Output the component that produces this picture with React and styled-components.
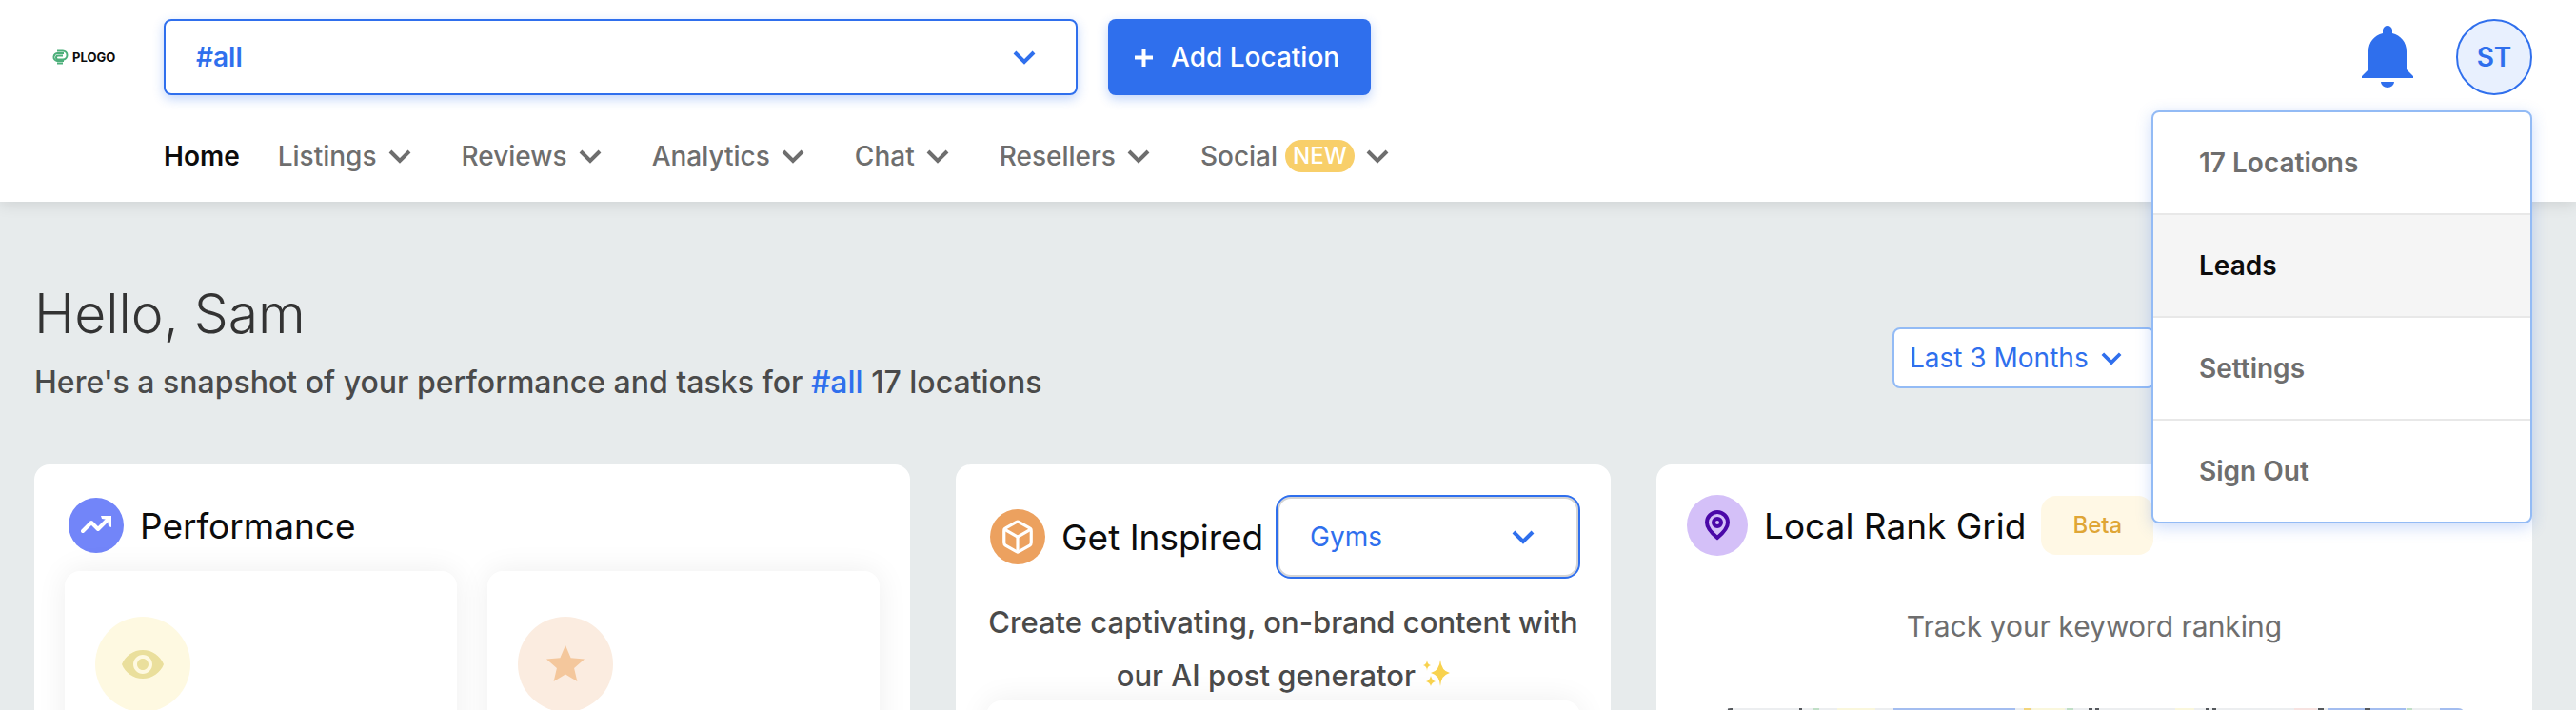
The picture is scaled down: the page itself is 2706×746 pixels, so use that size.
import * as React from 'react';
import styled, { createGlobalStyle, css } from 'styled-components';
import { MdRemoveRedEye, MdStar } from 'react-icons/md';
import { FiBox } from 'react-icons/fi';

const BLUE = '#2f6fed';
const LIGHT_BLUE = '#93bbf5';
const GREY = '#6e6e6e';

const NAV_ITEMS = [
  { name: 'Listings' },
  { name: 'Reviews' },
  { name: 'Analytics' },
  { name: 'Chat' },
  { name: 'Resellers' },
  { name: 'Social', isNew: true },
];

const MENU_ITEMS = ['17 Locations', 'Leads', 'Settings', 'Sign Out'];

const GlobalStyle = createGlobalStyle`
  * {
    box-sizing: border-box;
  }

  body {
    margin: 0;
    min-height: 100vh;
    background: #e7ebec;
    color: #0c0c0c;
    font-family: Inter, 'Liberation Sans', sans-serif;
    font-size: 28px;
    overflow: hidden;
  }

  button,
  select {
    font: inherit;
    color: inherit;
  }

  h1,
  h2,
  p,
  ul {
    margin: 0;
    padding: 0;
  }

  a {
    color: inherit;
    text-decoration: none;
  }
`;

const Header = styled.header`
  position: relative;
  z-index: 2;
  display: grid;
  grid-template-columns: 172px 1fr;
  padding: 20px 46px 0 0;
  background: #fff;
  box-shadow: 0 2px 16px rgba(0, 0, 0, 0.12);
`;

const Logo = styled.a`
  display: flex;
  align-items: center;
  gap: 4px;
  padding-left: 55px;
  font-size: 13px;
  font-weight: 700;
`;

const TopBar = styled.div`
  display: flex;
  align-items: center;
  gap: 32px;
  height: 80px;
`;

const SelectBox = styled.div`
  display: grid;
  align-items: center;
  color: ${BLUE};

  > * {
    grid-area: 1 / 1;
  }

  > svg {
    justify-self: end;
    pointer-events: none;
  }
`;

const Select = styled.select`
  appearance: none;
  width: 100%;
  height: 100%;
  border: 2px solid ${BLUE};
  background: #fff;
  outline: none;
`;

const LocationBox = styled(SelectBox)`
  flex: 0 1 960px;
  height: 80px;

  > svg {
    margin-right: 44px;
  }

  ${Select} {
    padding: 0 32px;
    border-radius: 8px;
    box-shadow: 0 4px 12px rgba(47, 111, 237, 0.3);
    font-weight: 600;
  }
`;

const AddButton = styled.button`
  display: flex;
  align-items: center;
  gap: 19px;
  height: 80px;
  padding: 0 33px 0 28px;
  border: 0;
  border-radius: 8px;
  background: ${BLUE};
  box-shadow: 0 4px 12px rgba(47, 111, 237, 0.3);
  color: #fff;
  font-weight: 500;
`;

const Account = styled.div`
  position: relative;
  display: flex;
  align-items: center;
  gap: 45px;
  margin-left: auto;
`;

const BellButton = styled.button`
  display: flex;
  padding: 0;
  border: 0;
  background: none;
`;

const Avatar = styled.button`
  width: 80px;
  height: 80px;
  padding: 0;
  border: 2px solid ${BLUE};
  border-radius: 50%;
  background: #e8f0fe;
  color: ${BLUE};
  font-weight: 600;
`;

const Menu = styled.ul`
  position: absolute;
  top: 96px;
  right: 0;
  width: 400px;
  border: 2px solid ${LIGHT_BLUE};
  border-radius: 8px;
  background: #fff;
  box-shadow: 0 4px 16px rgba(47, 111, 237, 0.25);
  list-style: none;
  overflow: hidden;
`;

const MenuItem = styled.li`
  color: ${GREY};
  font-weight: 600;

  & + & {
    border-top: 2px solid #e8e8e8;
  }

  a {
    display: block;
    padding: 0 48px;
    line-height: 106px;
  }

  ${({ $active }) =>
    $active &&
    css`
      background: #f5f5f5;
      color: #0c0c0c;
    `}
`;

const Nav = styled.nav`
  grid-column: 2;
  display: flex;
  align-items: center;
  gap: 53px;
  height: 112px;
  padding-top: 16px;
  color: ${GREY};
  font-weight: 500;
`;

const HomeLink = styled.a`
  margin-right: -13px;
  color: #0c0c0c;
  font-weight: 600;
`;

const NavButton = styled.button`
  display: flex;
  align-items: center;
  gap: 12px;
  padding: 0;
  border: 0;
  background: none;
`;

const NewBadge = styled.span`
  margin-left: -4px;
  padding: 0 8px;
  border-radius: 17px;
  background: #f8cf6a;
  color: #fff;
  font-size: 24px;
  line-height: 34px;
`;

const Page = styled.main`
  padding: 80px 46px 0 36px;
`;

const Intro = styled.section`
  display: flex;
  align-items: flex-start;
  justify-content: space-between;
`;

const Hello = styled.h1`
  color: #333;
  font-size: 57px;
  font-weight: 300;
  line-height: 76px;
`;

const Snapshot = styled.p`
  padding-top: 14px;
  color: #4a4a4a;
  font-size: 32px;
  font-weight: 500;
  line-height: 40px;

  a {
    color: ${BLUE};
  }
`;

const PeriodBox = styled(SelectBox)`
  width: 276px;
  height: 64px;
  margin: 52px 396px 0 0;

  > svg {
    margin-right: 35px;
  }

  ${Select} {
    padding: 0 16px;
    border-color: ${LIGHT_BLUE};
    border-radius: 8px;
  }
`;

const Cards = styled.section`
  display: grid;
  grid-template-columns: 115fr 86fr 115fr;
  gap: 48px;
  padding-top: 66px;
`;

const Card = styled.article`
  height: 600px;
  padding: 32px;
  border-radius: 16px;
  background: #fff;
`;

const CardHead = styled.div`
  display: flex;
  align-items: center;
  height: ${({ $height }) => $height}px;
  padding-left: ${({ $inset }) => $inset || 0}px;
`;

const CardTitle = styled.h2`
  margin-left: 17px;
  font-size: 37px;
  font-weight: 400;
  white-space: nowrap;
`;

const Circle = styled.span`
  display: flex;
  align-items: center;
  justify-content: center;
  flex: none;
  width: ${({ $size }) => $size}px;
  height: ${({ $size }) => $size}px;
  border-radius: 50%;
  background: ${({ $background }) => $background};
  color: ${({ $color }) => $color || '#fff'};
`;

const Tiles = styled.div`
  display: grid;
  grid-template-columns: 1fr 1fr;
  gap: 32px;
  padding-top: 16px;
`;

const Tile = styled.div`
  height: 360px;
  padding: 48px 32px;
  border-radius: 16px;
  background: #fff;
  box-shadow: 0 0 32px rgba(0, 0, 0, 0.07);
`;

const TopicBox = styled(SelectBox)`
  flex: 0 1 320px;
  height: 88px;
  margin-left: auto;

  > svg {
    margin-right: 48px;
  }

  ${Select} {
    padding: 0 34px;
    border-radius: 16px;
    box-shadow: inset 0 0 0 2px #d4d4d4;
  }
`;

const Pitch = styled.p`
  margin: 18px 0 -2px;
  color: #4a4a4a;
  font-size: 31px;
  font-weight: 500;
  line-height: 56px;
  text-align: center;
  white-space: nowrap;
`;

const BetaBadge = styled.span`
  margin-left: 16px;
  padding: 0 33px;
  border-radius: 16px;
  background: #fff8e5;
  color: #dfa636;
  font-size: 24px;
  font-weight: 500;
  line-height: 62px;
`;

const Track = styled.p`
  padding-top: 54px;
  color: ${GREY};
  font-size: 30px;
  line-height: 40px;
  text-align: center;
`;

const MapImage = styled.svg`
  display: block;
  width: calc(100% - 76px);
  height: 240px;
  margin: 66px auto 0;
  border-radius: 8px;
`;

const Chevron = ({ width = 24 }) => (
  <svg width={width} viewBox="0 0 24 16" fill="none" aria-hidden="true">
    <path d="M2 3l10 10L22 3" stroke="currentColor" strokeWidth="4" />
  </svg>
);

const PlusIcon = () => (
  <svg width="19" height="19" viewBox="0 0 19 19" aria-hidden="true">
    <path d="M9.5 0v19M0 9.5h19" stroke="currentColor" strokeWidth="4" />
  </svg>
);

const LogoMark = () => (
  <svg width="17" height="16" viewBox="0 0 17 16" fill="none" aria-hidden="true">
    <g stroke="#4caf7a" strokeWidth="2">
      <path d="M5 1.5h6a4.500 4.500 0 0 1 0 9H6a2 2 0 0 1 0-4h5" />
      <path d="M12 4H6a4 4 0 0 0-1 8h7M5 14.5h6" />
    </g>
  </svg>
);

const BellIcon = () => (
  <svg width="54" height="66" viewBox="0 0 54 66" fill={BLUE} aria-hidden="true">
    <path d="M22 8V5a5 5 0 0 1 10 0v3c9 2 15 9.5 15 19v19l7 7v2H0v-2l7-7V27C7 17.5 13 10 22 8z" />
    <path d="M20 59h14a7 6 0 0 1-14 0z" />
  </svg>
);

const TrendIcon = () => (
  <svg width="32" height="24" viewBox="0 0 32 24" fill="none" aria-hidden="true">
    <path
      d="M2 18L11 9l7 7L29 5"
      stroke="currentColor"
      strokeWidth="4"
      strokeLinecap="round"
      strokeLinejoin="round"
    />
    <path d="M21 2h11v12l-3-1-1-7-6-1z" fill="currentColor" />
  </svg>
);

const PinIcon = () => (
  <svg width="28" height="32" viewBox="0 0 28 32" fill="none" aria-hidden="true">
    <g stroke="#4a08a8" strokeWidth="4">
      <path d="M14 29C8 24 3 19 3 13a11 11 0 0 1 22 0c0 6-5 11-11 16z" />
      <circle cx="14" cy="13" r="4" />
    </g>
  </svg>
);

const Sparkles = () => (
  <svg width="28" height="28" viewBox="0 0 28 28" fill="#f8d24e" aria-hidden="true">
    <path d="M18 0q1 12 10 14-9 2-10 14-1-12-10-14 9-2 10-14z" />
    <path d="M4 0q0 5 4 6-4 1-4 6 0-5-4-6 4-1 4-6zM8 17q1 5 5 6-4 1-5 5-1-4-5-5 4-1 5-6z" />
  </svg>
);

const CityMap = () => (
  <MapImage viewBox="0 0 780 240" preserveAspectRatio="none" aria-hidden="true">
    <rect width="780" height="240" fill="#eceef0" />
    <path d="M179 0h128v240H179zM636 0h81v240h-81zM753 0h27v240h-27z" fill="#a3bdf0" />
    <path d="M95 0h6v240h-6zM361 0h7v240h-7zM718 0h6v240h-6z" fill="#c0dfc6" />
    <path d="M120 0h40v240h-40zM325 0h34v240h-34zM475 0h20v240h-20z" fill="#faf7dc" />
    <path d="M600 0h24v240h-24z" fill="#f7e2e0" />
    <path d="M316 0h7v240h-7z" fill="#f3d57a" />
    <path
      d="M5 1h5M80 1h3M384 1h4M391 1h4M507 1h4M514 1h4M625 1h6M674 1h6"
      stroke="#55585c"
      strokeWidth="2"
    />
  </MapImage>
);

const App = () => {
  const [location, setLocation] = React.useState('#all');
  const [activeItem, setActiveItem] = React.useState('Leads');

  return (
    <>
      <GlobalStyle />
      <Header>
        <Logo href="#home">
          <LogoMark />
          PLOGO
        </Logo>
        <TopBar>
          <LocationBox>
            <Select
              aria-label="Location"
              value={location}
              onChange={(e) => setLocation(e.target.value)}
            >
              <option>#all</option>
            </Select>
            <Chevron />
          </LocationBox>
          <AddButton type="button">
            <PlusIcon />
            Add Location
          </AddButton>
          <Account>
            <BellButton type="button" aria-label="Notifications">
              <BellIcon />
            </BellButton>
            <Avatar type="button">ST</Avatar>
            <Menu>
              {MENU_ITEMS.map((name) => (
                <MenuItem
                  key={name}
                  $active={name === activeItem}
                  onMouseEnter={() => setActiveItem(name)}
                >
                  <a href="#menu">{name}</a>
                </MenuItem>
              ))}
            </Menu>
          </Account>
        </TopBar>
        <Nav>
          <HomeLink href="#home">Home</HomeLink>
          {NAV_ITEMS.map(({ name, isNew }) => (
            <NavButton key={name} type="button">
              {name}
              {isNew && <NewBadge>NEW</NewBadge>}
              <Chevron />
            </NavButton>
          ))}
        </Nav>
      </Header>
      <Page>
        <Intro>
          <div>
            <Hello>Hello, Sam</Hello>
            <Snapshot>
              Here's a snapshot of your performance and tasks for{' '}
              <a href="#all">#all</a> 17 locations
            </Snapshot>
          </div>
          <PeriodBox>
            <Select aria-label="Period">
              <option>Last 3 Months</option>
            </Select>
            <Chevron width={22} />
          </PeriodBox>
        </Intro>
        <Cards>
          <Card>
            <CardHead $height={64} $inset={4}>
              <Circle $size={58} $background="#7285f9">
                <TrendIcon />
              </Circle>
              <CardTitle>Performance</CardTitle>
            </CardHead>
            <Tiles>
              <Tile>
                <Circle $size={100} $background="#fef9e1" $color="#eadf9c">
                  <MdRemoveRedEye size={48} />
                </Circle>
              </Tile>
              <Tile>
                <Circle $size={100} $background="#fbece0" $color="#f4c79c">
                  <MdStar size={48} />
                </Circle>
              </Tile>
            </Tiles>
          </Card>
          <Card>
            <CardHead $height={88} $inset={4}>
              <Circle $size={58} $background="#eca15f">
                <FiBox size={38} />
              </Circle>
              <CardTitle>Get Inspired</CardTitle>
              <TopicBox>
                <Select aria-label="Topic">
                  <option>Gyms</option>
                </Select>
                <Chevron />
              </TopicBox>
            </CardHead>
            <Pitch>
              Create captivating, on-brand content with
              <br />
              our AI post generator <Sparkles />
            </Pitch>
            <Tile />
          </Card>
          <Card>
            <CardHead $height={64}>
              <Circle $size={64} $background="#d4c0f8">
                <PinIcon />
              </Circle>
              <CardTitle>Local Rank Grid</CardTitle>
              <BetaBadge>Beta</BetaBadge>
            </CardHead>
            <Track>Track your keyword ranking</Track>
            <CityMap />
          </Card>
        </Cards>
      </Page>
    </>
  );
};

export default App;
